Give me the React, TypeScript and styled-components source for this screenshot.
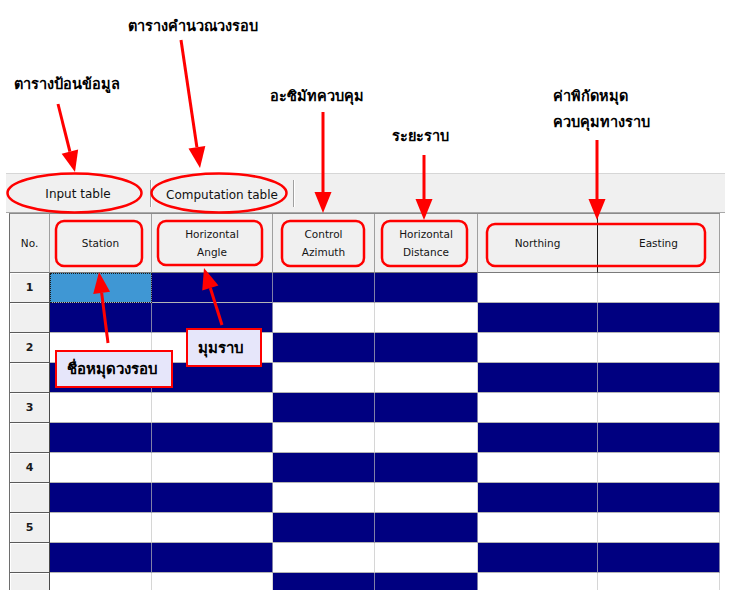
import React from "react";
import styled, { createGlobalStyle } from "styled-components";

const GlobalStyle = createGlobalStyle`
  html, body {
    margin: 0;
    padding: 0;
    background: #ffffff;
  }
  body {
    font-family: "DejaVu Sans", "Liberation Sans", sans-serif;
  }
`;

const RED = "#ff0000";
const NAVY = "#000080";

const Page = styled.div`
  position: relative;
  width: 733px;
  height: 590px;
  overflow: hidden;
  padding-top: 173px;
  box-sizing: border-box;
  background: #ffffff;
`;

const TabBar = styled.div`
  display: flex;
  align-items: stretch;
  width: 719px;
  height: 40px;
  margin-left: 6px;
  box-sizing: border-box;
  background: #f0f0f0;
  border-top: 1px solid #d6d6d6;
  border-bottom: 1px solid #a9a9a9;
`;

const Tab = styled.div<{ $w: number; $dy?: number }>`
  display: flex;
  align-items: center;
  justify-content: center;
  width: ${(p) => p.$w}px;
  margin: 6px 0 5px;
  padding-top: ${(p) => p.$dy ?? 0}px;
  box-sizing: border-box;
  border-right: 1px solid #a0a0a0;
  box-shadow: 1px 0 0 #ffffff;
  font-size: 12px;
  color: #111111;
`;

const Grid = styled.div`
  display: grid;
  grid-template-columns: 40px 102px 121px 102px 103px 120px 122px;
  grid-template-rows: 59px;
  grid-auto-rows: 30px;
  width: 711px;
  margin-left: 9px;
  box-sizing: border-box;
  border-left: 1px solid #6e6e6e;
  border-top: 1px solid #8a8a8a;
`;

const HeaderCell = styled.div<{ $dark?: boolean }>`
  display: flex;
  flex-direction: column;
  align-items: center;
  justify-content: center;
  gap: 6px;
  background: #f0f0f0;
  border-right: 1px solid ${(p) => (p.$dark ? "#1a1a1a" : "#a0a0a0")};
  border-bottom: 1px solid #7a7a7a;
  box-sizing: border-box;
  font-size: 10.5px;
  color: #151515;
`;

const RowHead = styled.div`
  display: flex;
  align-items: center;
  justify-content: center;
  background: #f0f0f0;
  border-right: 1px solid #4a4a4a;
  border-bottom: 1px solid #5a5a5a;
  box-shadow: inset 1px 1px 0 #ffffff;
  box-sizing: border-box;
  font-size: 11px;
  font-weight: bold;
  color: #1a1a1a;
`;

type Fill = "white" | "navy" | "selected";

const Cell = styled.div<{ $fill: Fill }>`
  box-sizing: border-box;
  background: ${(p) =>
    p.$fill === "navy" ? NAVY : p.$fill === "selected" ? "#3f97d4" : "#ffffff"};
  border-right: 1px solid ${(p) => (p.$fill === "white" ? "#d6d6d6" : "#7f7fa8")};
  border-bottom: 1px solid #b4b4b4;
  outline: ${(p) => (p.$fill === "selected" ? "1px dotted #1a1a1a" : "none")};
  outline-offset: -1px;
`;

const Overlay = styled.svg`
  position: absolute;
  left: 0;
  top: 0;
  pointer-events: none;
`;

const Label = styled.div<{ $x: number; $y: number }>`
  position: absolute;
  left: ${(p) => p.$x}px;
  top: ${(p) => p.$y}px;
  display: flex;
  flex-direction: column;
  gap: 11px;
  font-size: 14.5px;
  font-weight: bold;
  color: #000000;
  white-space: nowrap;
  line-height: 1;
`;

const Callout = styled.div<{ $x: number; $y: number; $w: number; $h: number }>`
  position: absolute;
  left: ${(p) => p.$x}px;
  top: ${(p) => p.$y}px;
  width: ${(p) => p.$w}px;
  height: ${(p) => p.$h}px;
  box-sizing: border-box;
  padding-left: 10px;
  display: flex;
  align-items: center;
  background: #e6e6fa;
  border: 2px solid ${RED};
  font-size: 15px;
  font-weight: bold;
  color: #000000;
  white-space: nowrap;
`;

const headers: string[][] = [
  ["No."],
  ["Station"],
  ["Horizontal", "Angle"],
  ["Control", "Azimuth"],
  ["Horizontal", "Distance"],
  ["Northing"],
  ["Easting"],
];

function rowFills(r: number): Fill[] {
  if (r === 0) return ["selected", "navy", "navy", "navy", "white", "white"];
  const even = r % 2 === 0;
  return even
    ? ["white", "white", "navy", "navy", "white", "white"]
    : ["navy", "navy", "white", "white", "navy", "navy"];
}

function Arrow({ x1, y1, x2, y2 }: { x1: number; y1: number; x2: number; y2: number }) {
  const dx = x2 - x1;
  const dy = y2 - y1;
  const len = Math.hypot(dx, dy);
  const ux = dx / len;
  const uy = dy / len;
  const L = 21;
  const W = 8.5;
  const bx = x2 - ux * L;
  const by = y2 - uy * L;
  const px = -uy * W;
  const py = ux * W;
  return (
    <g>
      <line x1={x1} y1={y1} x2={bx} y2={by} stroke={RED} strokeWidth={3} />
      <polygon
        points={`${x2},${y2} ${bx + px},${by + py} ${bx - px},${by - py}`}
        fill={RED}
      />
    </g>
  );
}

const boxes = [
  { x: 56, y: 221, w: 86, h: 45 },
  { x: 158, y: 221, w: 104, h: 44 },
  { x: 282, y: 221, w: 82, h: 45 },
  { x: 382, y: 221, w: 85, h: 45 },
  { x: 487, y: 224, w: 218, h: 42 },
];

const arrows = [
  { x1: 58, y1: 104, x2: 75, y2: 172 },
  { x1: 181, y1: 40, x2: 200, y2: 168 },
  { x1: 323, y1: 112, x2: 323, y2: 213 },
  { x1: 424, y1: 155, x2: 424, y2: 220 },
  { x1: 597, y1: 140, x2: 597, y2: 220 },
  { x1: 108, y1: 343, x2: 99, y2: 272 },
  { x1: 222, y1: 325, x2: 204, y2: 268 },
];

export default function App() {
  const rows = Array.from({ length: 11 }, (_, r) => r);
  return (
    <>
      <GlobalStyle />
      <Page>
        <TabBar>
          <Tab $w={145}>Input table</Tab>
          <Tab $w={143} $dy={3}>
            Computation table
          </Tab>
        </TabBar>

        <Grid>
          {headers.map((lines, i) => (
            <HeaderCell key={i} $dark={i === 5}>
              {lines.map((l) => (
                <span key={l}>{l}</span>
              ))}
            </HeaderCell>
          ))}
          {rows.map((r) => (
            <React.Fragment key={r}>
              <RowHead>{r % 2 === 0 && r < 10 ? r / 2 + 1 : ""}</RowHead>
              {rowFills(r).map((f, c) => (
                <Cell key={c} $fill={f} />
              ))}
            </React.Fragment>
          ))}
        </Grid>

        <Overlay width={733} height={590} viewBox="0 0 733 590">
          <ellipse cx={74.5} cy={193} rx={67} ry={19.5} fill="none" stroke={RED} strokeWidth={2.5} />
          <ellipse cx={219} cy={193} rx={67.5} ry={19.5} fill="none" stroke={RED} strokeWidth={2.5} />
          {boxes.map((b, i) => (
            <rect
              key={i}
              x={b.x}
              y={b.y}
              width={b.w}
              height={b.h}
              rx={8}
              fill="none"
              stroke={RED}
              strokeWidth={2.5}
            />
          ))}
          {arrows.map((a, i) => (
            <Arrow key={i} {...a} />
          ))}
        </Overlay>

        <Label $x={128} $y={19}>ตารางคำนวณวงรอบ</Label>
        <Label $x={14} $y={77}>ตารางป้อนข้อมูล</Label>
        <Label $x={270} $y={89}>อะซิมัทควบคุม</Label>
        <Label $x={392} $y={129}>ระยะราบ</Label>
        <Label $x={553} $y={89}>
          <span>ค่าพิกัดหมุด</span>
          <span>ควบคุมทางราบ</span>
        </Label>

        <Callout $x={55} $y={350} $w={118} $h={38}>ชื่อหมุดวงรอบ</Callout>
        <Callout $x={186} $y={328} $w={76} $h={39}>มุมราบ</Callout>
      </Page>
    </>
  );
}
